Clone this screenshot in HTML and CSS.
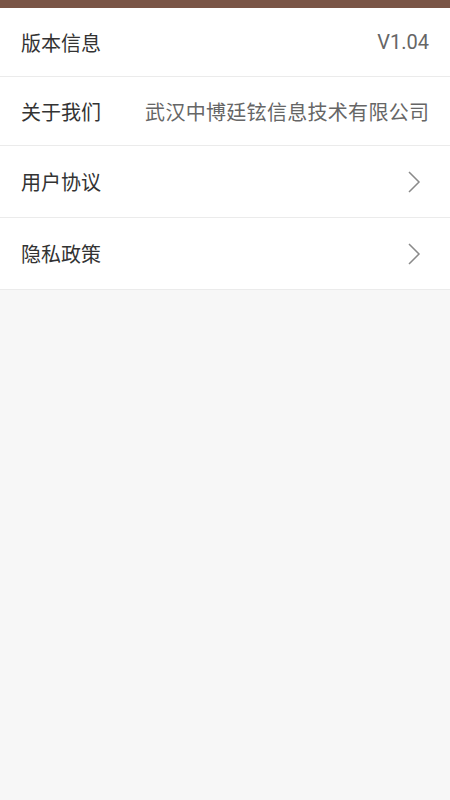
FILE: index.html
```html
<!DOCTYPE html>
<html lang="zh-CN">
<head>
    <meta charset="UTF-8">
    <meta name="viewport" content="width=device-width, initial-scale=1.0">
    <title>关于</title>
    <link rel="stylesheet" href="styles.css">
</head>
<body>
    <!-- Status Bar -->
    <div class="status-bar"></div>

    <!-- Info List -->
    <div class="list">
        <div class="row">
            <span class="label">版本信息</span>
            <span class="value">V1.04</span>
        </div>
        <div class="row">
            <span class="label">关于我们</span>
            <span class="value company">武汉中博廷铉信息技术有限公司</span>
        </div>
        <div class="row row-link">
            <span class="label">用户协议</span>
            <svg class="arrow" width="14" height="24" viewBox="0 0 14 24">
                <path d="M2 2 L12 12 L2 22" fill="none" stroke="#8a8a8a" stroke-width="1.5"/>
            </svg>
        </div>
        <div class="row row-link">
            <span class="label">隐私政策</span>
            <svg class="arrow" width="14" height="24" viewBox="0 0 14 24">
                <path d="M2 2 L12 12 L2 22" fill="none" stroke="#8a8a8a" stroke-width="1.5"/>
            </svg>
        </div>
    </div>
</body>
</html>
```

FILE: styles.css
```css
body {
    margin: 0;
    padding: 0;
    background-color: #f7f7f7;
    font-family: Roboto, "Noto Sans CJK SC", sans-serif;
    height: 100vh;
}
.status-bar {
    height: 8px;
    background-color: #7a5546;
}
.list {
    background-color: #ffffff;
}
.row {
    display: flex;
    align-items: center;
    justify-content: space-between;
    height: 68px;
    padding: 0 21px;
    border-bottom: 1px solid #ebebeb;
}
.row-link {
    height: 71px;
    padding-right: 29px;
}
.label {
    font-size: 20px;
    color: #333333;
}
.value {
    font-size: 20px;
    color: #666666;
}
.company {
    letter-spacing: 0.3px;
    margin-right: -0.3px;
}
.arrow {
    display: block;
}
```
